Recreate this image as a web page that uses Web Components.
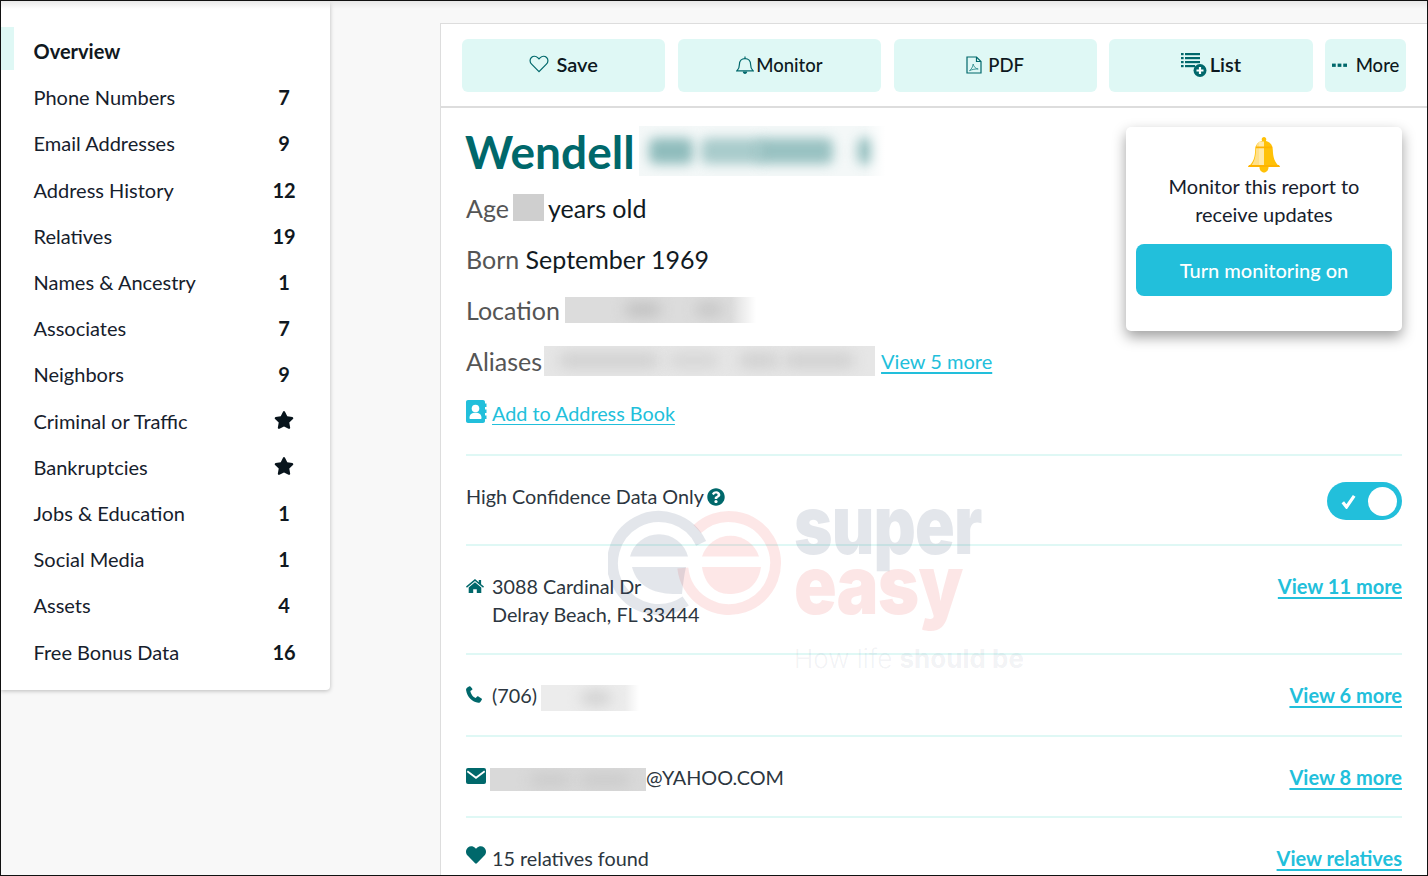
<!DOCTYPE html>
<html lang="en">
<head>
<meta charset="utf-8">
<title>Report</title>
<style>
  html, body { margin: 0; height: 100%; }
  body { font-family: Lato, "Liberation Sans", sans-serif; overflow: hidden; background: #f8f8f8; }
</style>
</head>
<body>
<report-app>
  <side-nav slot="nav">
    <nav-item active>Overview</nav-item>
    <nav-item count="7">Phone Numbers</nav-item>
    <nav-item count="9">Email Addresses</nav-item>
    <nav-item count="12">Address History</nav-item>
    <nav-item count="19">Relatives</nav-item>
    <nav-item count="1">Names &amp; Ancestry</nav-item>
    <nav-item count="7">Associates</nav-item>
    <nav-item count="9">Neighbors</nav-item>
    <nav-item star>Criminal or Traffic</nav-item>
    <nav-item star>Bankruptcies</nav-item>
    <nav-item count="1">Jobs &amp; Education</nav-item>
    <nav-item count="1">Social Media</nav-item>
    <nav-item count="4">Assets</nav-item>
    <nav-item count="16">Free Bonus Data</nav-item>
  </side-nav>
  <report-card slot="main"></report-card>
</report-app>

<script>
const ICONS = {
  star: '<svg viewBox="0 0 576 512"><path fill="currentColor" d="M259.3 17.8L194 150.2 47.9 171.5c-26.2 3.8-36.7 36.1-17.7 54.6l105.7 103-25 145.5c-4.5 26.3 23.2 46 46.4 33.7L288 439.6l130.7 68.7c23.2 12.2 50.9-7.4 46.4-33.7l-25-145.5 105.7-103c19-18.5 8.5-50.8-17.7-54.6L382 150.2 316.7 17.8c-11.7-23.6-45.6-23.9-57.4 0z"/></svg>',
  heartLine: '<svg viewBox="0 0 20 18"><path fill="none" stroke="#00686b" stroke-width="1.2" d="M10 16.6 2.6 9.2C.6 7.2.6 4.2 2.4 2.5 4.2.8 7 1 8.7 2.7L10 4l1.3-1.3C13 1 15.800.8 17.600 2.500c1.800 1.700 1.800 4.700-.2 6.700z"/></svg>',
  bellLine: '<svg viewBox="0 0 18 20"><g fill="none" stroke="#00686b" stroke-width="1.2"><path d="M1 15.800c1.500-1.300 2.400-2.700 2.400-6.300 0-3.400 2.200-5.900 5.600-5.900s5.600 2.500 5.600 5.900c0 3.600.9 5 2.400 6.300z"/><path d="M9 3.500V1.400"/></g><path fill="#00686b" d="M6.800 16.600h4.400c0 1.300-1 2.400-2.200 2.400s-2.200-1.100-2.200-2.400z"/></svg>',
  pdf: '<svg viewBox="0 0 16 18"><g fill="none" stroke="#00686b" stroke-width="1.200"><path d="M1 1h9.500L15 5.500V17H1z"/><path d="M10.500 1v4.500H15"/><path stroke-width=".9" stroke="#2f8f8f" d="M3.500 14.600c1.800-1 3.200-3.600 3.700-6.600.5 2.600 2 4.500 5 5-2.700-.2-6 .4-8.700 1.600z"/></g></svg>',
  list: '<svg viewBox="0 0 26 26"><g fill="#00686b"><rect x="0" y="1" width="2.600" height="2.200"/><rect x="4" y="1" width="15" height="2.200"/><rect x="0" y="5" width="2.600" height="2.200"/><rect x="4" y="5" width="15" height="2.200"/><rect x="0" y="9" width="2.600" height="2.200"/><rect x="4" y="9" width="15" height="2.200"/><rect x="0" y="13" width="2.600" height="2.200"/><rect x="4" y="13" width="10" height="2.200"/><circle cx="19" cy="18.500" r="6.500"/></g><path stroke="#fff" stroke-width="2.200" d="M19 15v7M15.500 18.500h7"/></svg>',
  dots: '<svg viewBox="0 0 16 4"><g fill="#00686b"><rect x="0" y=".5" width="4" height="3.500"/><rect x="6" y=".5" width="4" height="3.500"/><rect x="12" y=".5" width="4" height="3.500"/></g></svg>',
  bellGold: '<svg viewBox="0 0 32 36"><path fill="#ffc107" d="M16 0c1.300 0 2.300 1 2.300 2.300l-.3 1.700c4.300 1 6.600 4.200 6.800 8.700.3 7 1.300 12.500 7.200 17.300H0c5.900-4.800 6.900-10.300 7.200-17.300C7.400 8.200 9.700 5 14 4l-.3-1.700C13.700 1 14.700 0 16 0z"/><path fill="#ffe08a" d="M11.200 4.700C9 6.500 8 9 8 12.700 7.700 19.700 6.700 25.200 1.900 30H11z"/><path fill="#ffe9a8" d="M11 4.500h5V30h-5z"/><path fill="#ffb300" d="M7.800 9.500h16.400v1.800H7.800zM1 28h30l1 2H0z"/><path fill="#ffc107" d="M11.500 30h9c0 3.200-2 5.500-4.500 5.500s-4.500-2.300-4.500-5.500z"/></svg>',
  book: '<svg viewBox="0 0 21 23"><path fill="#22bfdb" d="M2 0h15c1.100 0 2 .9 2 2v1.500h1.500V7H19v2.500h1.500V13H19v2.500h1.500V19H19v2c0 1.100-.9 2-2 2H2c-1.100 0-2-.9-2-2V2C0 .9.9 0 2 0z"/><circle cx="9.500" cy="8.500" r="3.800" fill="#fff"/><path fill="#fff" d="M3.500 18c0-3.600 2.200-5.300 6-5.300s6 1.700 6 5.300c0 .6-.4 1-1 1h-10c-.6 0-1-.4-1-1z"/></svg>',
  help: '<svg viewBox="0 0 512 512"><path fill="#00686b" d="M504 256c0 136.997-111.043 248-248 248S8 392.997 8 256C8 119.083 119.043 8 256 8s248 111.083 248 248zM262.655 90c-54.497 0-89.255 22.957-116.549 63.758-3.536 5.286-2.353 12.415 2.715 16.258l34.699 26.31c5.205 3.947 12.621 3.008 16.665-2.122 17.864-22.658 30.113-35.797 57.303-35.797 20.429 0 45.698 13.148 45.698 32.958 0 14.976-12.363 22.667-32.534 33.976C247.128 238.528 216 254.941 216 296v4c0 6.627 5.373 12 12 12h56c6.627 0 12-5.373 12-12v-1.333c0-28.462 83.186-29.647 83.186-106.667 0-58.002-60.165-102-116.531-102zM256 338c-25.365 0-46 20.635-46 46 0 25.364 20.635 46 46 46s46-20.636 46-46c0-25.365-20.635-46-46-46z"/></svg>',
  home: '<svg viewBox="0 0 20 16"><path fill="#00686b" d="M10 0 0 8.400l1 1.200L10 2.100l9 7.500 1-1.200-3.200-2.700V1h-2.600v2.500z"/><path fill="#00686b" d="M10 3.600 3 9.500V16h5v-4.500h4V16h5V9.500z"/></svg>',
  phone: '<svg viewBox="0 0 16 17"><path fill="#00686b" d="M3.400.3 1.300 1.500C.3 2.100-.1 3 .1 4.200c.6 3.300 2 6.200 4.200 8.600 2.200 2.300 5 3.800 8 4 1.100.1 1.900-.4 2.400-1.200l1.100-1.900c.3-.5.200-1-.3-1.300l-3.100-2c-.4-.3-.9-.2-1.300.2L9.700 12c-1.400-.5-2.600-1.500-3.600-2.800-1-1.300-1.600-2.700-1.800-4.100l1.600-1c.5-.3.6-.8.400-1.300L4.700.7C4.400.2 3.900 0 3.400.3z"/></svg>',
  mail: '<svg viewBox="0 0 20 16"><rect width="20" height="16" rx="2" fill="#00686b"/><path d="M1.300 3.200 10 9.800l8.700-6.600" fill="none" stroke="#fff" stroke-width="1.800"/></svg>',
  heart: '<svg viewBox="0 0 512 512"><path fill="#00686b" d="M462.300 62.600C407.500 15.900 326 24.300 275.700 76.200L256 96.500l-19.700-20.300C186.100 24.300 104.500 15.900 49.700 62.600c-62.800 53.600-66.100 149.800-9.900 207.900l193.500 199.800c12.500 12.900 32.800 12.900 45.300 0l193.500-199.800c56.300-58.100 53-154.300-9.800-207.900z"/></svg>'
};

class ReportApp extends HTMLElement {
  constructor() {
    super();
    this.attachShadow({mode: 'open'}).innerHTML = `
      <style>
        :host { display: flex; height: 876px; align-items: flex-start; position: relative; overflow: hidden; }
        /* top bar shadow and the dark frame of the capture */
        :host::before { content: ''; position: absolute; inset: 0 0 auto 0; height: 9px; background: linear-gradient(#e6e6e6, rgba(235,235,235,0)); z-index: 3; }
        :host::after { content: ''; position: absolute; inset: 0; border: 1px solid #111; z-index: 5; pointer-events: none; }
        .nav { flex: none; margin-left: 1px; margin-right: 110px; }
        .main { flex: 1; min-width: 0; margin-top: 23px; }
      </style>
      <div class="nav"><slot name="nav"></slot></div>
      <div class="main"><slot name="main"></slot></div>`;
  }
}

class SideNav extends HTMLElement {
  constructor() {
    super();
    this.attachShadow({mode: 'open'}).innerHTML = `
      <style>
        :host { display: block; box-sizing: border-box; width: 329px; height: 690px; padding-top: 28px; background: #fff; box-shadow: 0 1px 4px rgba(0,0,0,.25); border-radius: 0 0 4px 0; }
      </style>
      <slot></slot>`;
  }
}

class NavItem extends HTMLElement {
  constructor() {
    super();
    const count = this.getAttribute('count');
    const right = this.hasAttribute('star') ? `<span class="star">${ICONS.star}</span>` : (count || '');
    this.attachShadow({mode: 'open'}).innerHTML = `
      <style>
        :host { display: flex; align-items: center; height: 46.2px; padding-left: 32.500px; font-size: 20px; color: #16202c; position: relative; }
        :host([active]) { font-weight: 700; color: #101820; }
        :host([active])::before { content: ''; position: absolute; left: 0; top: -1px; width: 13px; height: 43px; background: #dff8f5; }
        .label { flex: 1; }
        .count { width: 34px; margin-right: 29px; text-align: center; font-weight: 700; color: #101820; line-height: 1; }
        .star { display: inline-flex; width: 20px; height: 18px; color: #08141c; }
      </style>
      <span class="label"><slot></slot></span>
      <span class="count">${right}</span>`;
  }
}

class ToolButton extends HTMLElement {
  constructor() {
    super();
    this.attachShadow({mode: 'open'}).innerHTML = `
      <style>
        :host { display: flex; flex: 1 1 0; box-sizing: border-box; height: 53px; padding-bottom: var(--lift, 2px); align-items: center; justify-content: center; gap: var(--gap, 3px); background: #dff8f5; border-radius: 6px; font-size: var(--size, 18.500px); font-weight: var(--weight, 500); color: #0d1820; }
        :host([small]) { flex: 0 0 81px; }
        ::slotted(span) { display: inline-flex; }
      </style>
      <slot name="icon"></slot><slot></slot>`;
  }
}

class ReportToolbar extends HTMLElement {
  constructor() {
    super();
    this.attachShadow({mode: 'open'}).innerHTML = `
      <style>
        :host { display: flex; gap: 12.500px; padding: 15px 22px 14px 21px; border-bottom: 2px solid #ddd; background: #fff; }
        span { display: inline-flex; }
      </style>
      <tool-button style="--gap:7px;--size:20px;--weight:600;--lift:3px"><span slot="icon" style="width:20px;height:18px">${ICONS.heartLine}</span>Save</tool-button>
      <tool-button style="--gap:2px"><span slot="icon" style="width:18px;height:20px">${ICONS.bellLine}</span>Monitor</tool-button>
      <tool-button style="--gap:6px"><span slot="icon" style="width:16px;height:18px">${ICONS.pdf}</span>PDF</tool-button>
      <tool-button style="--gap:3px;--size:20px;--weight:600;--lift:3px"><span slot="icon" style="width:26px;height:26px;margin-bottom:-2px">${ICONS.list}</span>List</tool-button>
      <tool-button small style="--gap:9px"><span slot="icon" style="width:15px;height:4px">${ICONS.dots}</span>More</tool-button>`;
  }
}

// grey smear standing in for hidden personal data
class RedactBox extends HTMLElement {
  constructor() {
    super();
    const blobs = (this.getAttribute('blobs') || '').split(';').filter(Boolean).map(b => {
      const [x, w, a] = b.split(',');
      return `<i style="left:${x}px;width:${w}px;opacity:${a || 1}"></i>`;
    }).join('');
    this.attachShadow({mode: 'open'}).innerHTML = `
      <style>
        :host { display: inline-block; position: relative; overflow: hidden; vertical-align: middle; background: var(--bg, #e2e2e2); }
        i { position: absolute; top: 24%; bottom: 24%; border-radius: 6px; background: var(--blob, #c4c4c4); filter: blur(var(--blur, 7px)); }
        .fade { position: absolute; top: 0; bottom: 0; right: 0; width: var(--fade, 0); background: linear-gradient(90deg, rgba(255,255,255,0), #fff); }
      </style>
      ${blobs}<div class="fade"></div>`;
  }
}

class ProfileLine extends HTMLElement {
  constructor() {
    super();
    this.attachShadow({mode: 'open'}).innerHTML = `
      <style>
        :host { display: flex; align-items: center; height: 51px; font-size: 25px; color: #111a22; white-space: pre; }
        ::slotted(b) { font-weight: 400; color: #555; }
      </style>
      <slot></slot>`;
  }
}

class InfoSection extends HTMLElement {
  constructor() {
    super();
    this.attachShadow({mode: 'open'}).innerHTML = `
      <style>
        :host { display: flex; justify-content: space-between; box-sizing: border-box; margin: 0 26px 0 25px; height: var(--h); padding-top: var(--pad); border-bottom: 2px solid #dff8f5; font-size: 19.800px; line-height: 28px; color: #2c3640; }
        :host([last]) { border-bottom: 0; }
        :host([plain]) .ico { display: none; }
        .left { display: flex; gap: 6px; }
        .ico { flex: none; width: 20px; display: flex; justify-content: flex-start; }
        ::slotted(a) { color: #22bfdb; font-size: 20px; font-weight: 700; text-decoration: underline; text-underline-offset: 3px; }
      </style>
      <div class="left"><span class="ico"><slot name="icon"></slot></span><div><slot></slot></div></div>
      <slot name="action"></slot>`;
  }
}

class ToggleSwitch extends HTMLElement {
  constructor() {
    super();
    this.attachShadow({mode: 'open'}).innerHTML = `
      <style>
        :host { display: flex; align-items: center; box-sizing: border-box; width: 75px; height: 38px; padding: 0 5px 0 14px; justify-content: space-between; border-radius: 19px; background: #22bfdb; }
        .knob { width: 29px; height: 29px; border-radius: 50%; background: #fff; }
        svg { width: 15px; height: 15px; }
      </style>
      <svg viewBox="0 0 15 15"><path d="M1.800 8.200 5.500 13 13.200 1.800" fill="none" stroke="#fff" stroke-width="3.200"/></svg>
      <div class="knob"></div>`;
  }
}

class MonitorPopup extends HTMLElement {
  constructor() {
    super();
    this.attachShadow({mode: 'open'}).innerHTML = `
      <style>
        :host { display: flex; flex-direction: column; align-items: center; box-sizing: border-box; position: absolute; right: 26px; top: 103px; width: 276px; height: 204px; padding: 10px 10px 0; background: #fff; border-radius: 5px; box-shadow: 0 6px 14px rgba(0,0,0,.38); font-size: 20px; line-height: 28px; color: #16202c; text-align: center; z-index: 2; }
        .bell { width: 32px; height: 35px; }
        p { margin: 0 0 16px; }
        button { width: 100%; height: 52px; padding: 0 0 1px; border: 0; border-radius: 8px; background: #22bfdb; color: #fff; font: 500 20px Lato, sans-serif; }
      </style>
      <div class="bell">${ICONS.bellGold}</div>
      <p>Monitor this report to<br>receive updates</p>
      <button>Turn monitoring on</button>`;
  }
}

class WatermarkLogo extends HTMLElement {
  constructor() {
    super();
    this.attachShadow({mode: 'open'}).innerHTML = `
      <style>
        :host { position: absolute; left: 167px; top: 486px; width: 430px; height: 172px; pointer-events: none; z-index: 1; font-family: Inter, "Liberation Sans", sans-serif; }
        svg { position: absolute; left: 0; top: 0; width: 176px; height: 112px; }
        div { position: absolute; left: 186px; white-space: pre; line-height: 1; }
        .w1, .w2 { font-size: 82px; font-weight: 900; letter-spacing: -1px; transform-origin: left; }
        .w1 { top: -26px; color: rgba(70,85,120,.15); transform: scaleX(.8); }
        .w2 { top: 34px; color: rgba(235,60,60,.13); transform: scaleX(.86); }
        .w3 { top: 136px; font-size: 26px; font-weight: 300; color: rgba(70,85,120,.08); }
        .w3 b { font-weight: 700; }
      </style>
      <svg viewBox="0 0 176 112">
        <g fill="none" stroke-width="11">
          <path d="M93.100 33.300A46.500 46.500 0 1 0 77.700 91.100" stroke="rgba(70,85,120,.15)"/>
          <path d="M89.300 19A46.500 46.500 0 1 1 74.800 58" stroke="rgba(235,60,60,.12)"/>
        </g>
        <path d="M22 46.500A30 30 0 0 1 80 46.500Z" fill="rgba(70,85,120,.15)"/>
        <path d="M24 57H78C76 66 75 74 74 84 52 85 30 80 24 57Z" fill="rgba(70,85,120,.15)"/>
        <path d="M94 46.500A30 30 0 0 1 151 46.500Z" fill="rgba(235,60,60,.12)"/>
        <path d="M94 57H153C150 78 135 84 121 84 106 84 96 72 94 57Z" fill="rgba(235,60,60,.12)"/>
      </svg>
      <div class="w1">super</div>
      <div class="w2">easy</div>
      <div class="w3">How life <b>should be</b></div>`;
  }
}

class ReportCard extends HTMLElement {
  constructor() {
    super();
    this.attachShadow({mode: 'open'}).innerHTML = `
      <style>
        :host { display: block; position: relative; height: 853px; box-sizing: border-box; background: #fff; border-top: 1px solid #ddd; border-left: 1px solid #ddd; }
        .head { padding: 17px 0 0 25px; }
        h1 { display: flex; align-items: center; margin: 0 0 5px -1px; height: 52px; font-size: 46px; font-weight: 700; color: #00686b; white-space: pre; }
        a { color: #22bfdb; text-decoration: underline; text-underline-offset: 3px; }
        .more { font-size: 20px; margin-left: 6px; padding-top: 1px; }
        .book { height: 51px; margin-top: 1px; display: flex; align-items: center; gap: 5px; font-size: 19.800px; }
        .book span { display: inline-flex; width: 21px; height: 23px; margin-bottom: 2px; }
        .rule { height: 2px; background: #dff8f5; margin: 16px 26px 0 25px; }
        .ic { display: block; }
        .help { display: inline-block; width: 18px; height: 18px; vertical-align: -2px; margin-left: 3px; }
      </style>
      <report-toolbar></report-toolbar>
      <div class="head">
        <h1>Wendell<redact-box style="width:246px;height:50px;margin-left:4px;--bg:#f4f8f8;--blob:#8fbcbc;--fade:20px;--blur:6px" blobs="10,44;62,62,.75;118,76,.9;218,18,.85"></redact-box></h1>
        <profile-line><b>Age</b><redact-box style="width:31px;height:27px;margin:0 4px;--bg:#cfcfcf"></redact-box>years old</profile-line>
        <profile-line><b>Born </b>September 1969</profile-line>
        <profile-line><b>Location</b><redact-box style="width:191px;height:26px;margin-left:5px;--bg:#dcdcdc;--blob:#bfbfbf;--fade:25px" blobs="60,36;130,28,.8"></redact-box></profile-line>
        <profile-line><b>Aliases</b><redact-box style="width:331px;height:30px;margin-left:2px;--bg:#e6e6e6;--blob:#d0d0d0" blobs="15,100;125,50,.7;195,40;240,70"></redact-box><a class="more">View 5 more</a></profile-line>
        <div class="book"><span>${ICONS.book}</span><a>Add to Address Book</a></div>
      </div>
      <div class="rule"></div>
      <info-section plain style="--h:90px;--pad:26px">
        High Confidence Data Only<span class="help">${ICONS.help}</span>
        <toggle-switch slot="action"></toggle-switch>
      </info-section>
      <info-section style="--h:109px;--pad:26px">
        <span class="ic" slot="icon" style="width:18px;height:15px;margin-top:-1px">${ICONS.home}</span>
        3088 Cardinal Dr<br>Delray Beach, FL 33444
        <a slot="action">View 11 more</a>
      </info-section>
      <info-section style="--h:82px;--pad:26px">
        <span class="ic" slot="icon" style="width:16px;height:17px">${ICONS.phone}</span>
        (706) <redact-box style="width:98px;height:26px;--bg:#ececec;--blob:#d0d0d0;--fade:14px;margin-left:-1px" blobs="40,30"></redact-box>
        <a slot="action">View 6 more</a>
      </info-section>
      <info-section style="--h:81px;--pad:26px">
        <span class="ic" slot="icon" style="width:20px;height:15px;margin-top:-1px">${ICONS.mail}</span>
        <redact-box style="width:156px;height:23px;--bg:#d9d9d9;--blob:#cacaca;margin-left:-2px" blobs="40,40;90,50"></redact-box>@YAHOO.COM
        <a slot="action">View 8 more</a>
      </info-section>
      <info-section last style="--h:60px;--pad:26px">
        <span class="ic" slot="icon" style="width:20px;height:20px;margin-top:-1px">${ICONS.heart}</span>
        15 relatives found
        <a slot="action">View relatives</a>
      </info-section>
      <monitor-popup></monitor-popup>
      <watermark-logo></watermark-logo>`;
  }
}

customElements.define('report-app', ReportApp);
customElements.define('side-nav', SideNav);
customElements.define('nav-item', NavItem);
customElements.define('tool-button', ToolButton);
customElements.define('report-toolbar', ReportToolbar);
customElements.define('redact-box', RedactBox);
customElements.define('profile-line', ProfileLine);
customElements.define('info-section', InfoSection);
customElements.define('toggle-switch', ToggleSwitch);
customElements.define('monitor-popup', MonitorPopup);
customElements.define('watermark-logo', WatermarkLogo);
customElements.define('report-card', ReportCard);
</script>
</body>
</html>
